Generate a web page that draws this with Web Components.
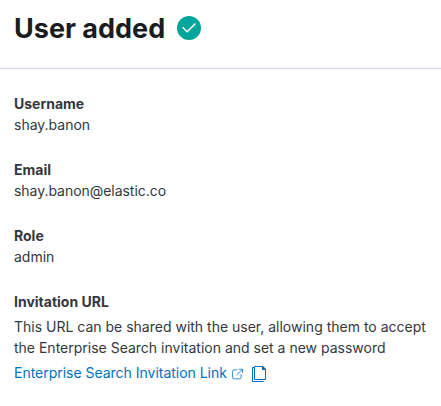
<!DOCTYPE html>
<html lang="en"><head><meta charset="utf-8"><title>User added</title>
<style>body{margin:0;background:#fff;font-family:Inter,"Liberation Sans",sans-serif;color:#343741}
.email{letter-spacing:-.04px}</style></head>
<body>
<user-added-flyout>
<flyout-header slot="header">User added</flyout-header>
<detail-field label="Username">shay.banon</detail-field>
<detail-field label="Email"><span class="email">shay.banon@elastic.co</span></detail-field>
<detail-field label="Role">admin</detail-field>
<detail-field label="Invitation URL" class="last">This URL can be shared with the user, allowing them to accept the Enterprise Search invitation and set a new password<invitation-link slot="extra">Enterprise Search Invitation Link</invitation-link></detail-field>
</user-added-flyout>
<script>
const define=(name,html,setup)=>customElements.define(name,class extends HTMLElement{
  connectedCallback(){if(this.shadowRoot)return;const root=this.attachShadow({mode:'open'});root.innerHTML=html;if(setup)setup(this,root);}
});
define('user-added-flyout',`<style>
:host{display:block;height:406px;overflow:hidden}
main{display:flex;flex-direction:column;gap:24px;padding:24px 14px 0}
</style><slot name="header"></slot><main><slot></slot></main>`);
define('flyout-header',`<style>
:host{display:flex;align-items:center;gap:12px;box-sizing:border-box;height:69px;padding:0 14px 12px;border-bottom:1px solid #d3dae6}
h1{margin:0;padding-top:1px;font-size:27px;line-height:32px;font-weight:700;color:#1a1c21;white-space:nowrap}
svg{display:block}
</style><h1><slot></slot></h1><svg width="24" height="24" viewBox="0 0 24 24"><circle cx="12" cy="12" r="12" fill="#00a69b"/><path d="M5.5 11.2l4.7 4.6 8.3-8.3" fill="none" stroke="#fff" stroke-width="1.5"/></svg>`);
define('detail-field',`<style>
:host{display:block;font-size:14px;line-height:21px}
h4{margin:0;font:inherit;font-weight:700}
p{margin:0}
:host(.last) p{margin-top:4px}
</style><h4></h4><p><slot></slot></p><slot name="extra"></slot>`,(el,root)=>{root.querySelector('h4').textContent=el.getAttribute('label')});
define('invitation-link',`<style>
:host{display:flex;align-items:center;margin-top:4px;height:21px;color:#0071c2;white-space:nowrap}
span{width:213px;letter-spacing:-.02px}
svg{display:block}
.ext{margin:2px 0 0 5px}.copy{margin:2px 0 0 8px}
</style><span><slot></slot></span>
<svg class="ext" width="12" height="12" viewBox="0 0 12 12" fill="none" stroke="currentColor" stroke-width=".8"><path d="M5.2 1.9H2Q.6 1.9.6 3.3V9.4Q.6 10.8 2 10.8H7.7Q9.1 10.8 9.1 9.4V6.2M4.5 7.2L10.5 1.3M6.8 1.3H10.5V5"/></svg>
<svg class="copy" width="16" height="16" viewBox="0 0 16 16" fill="none" stroke="currentColor"><path d="M2.5.5h8l3 3v10h-11zM2.5 1.5h-2v14h11"/><path d="M10 0h1l3 3v1h-4z" fill="currentColor" stroke="none"/></svg>`);
</script></body></html>
